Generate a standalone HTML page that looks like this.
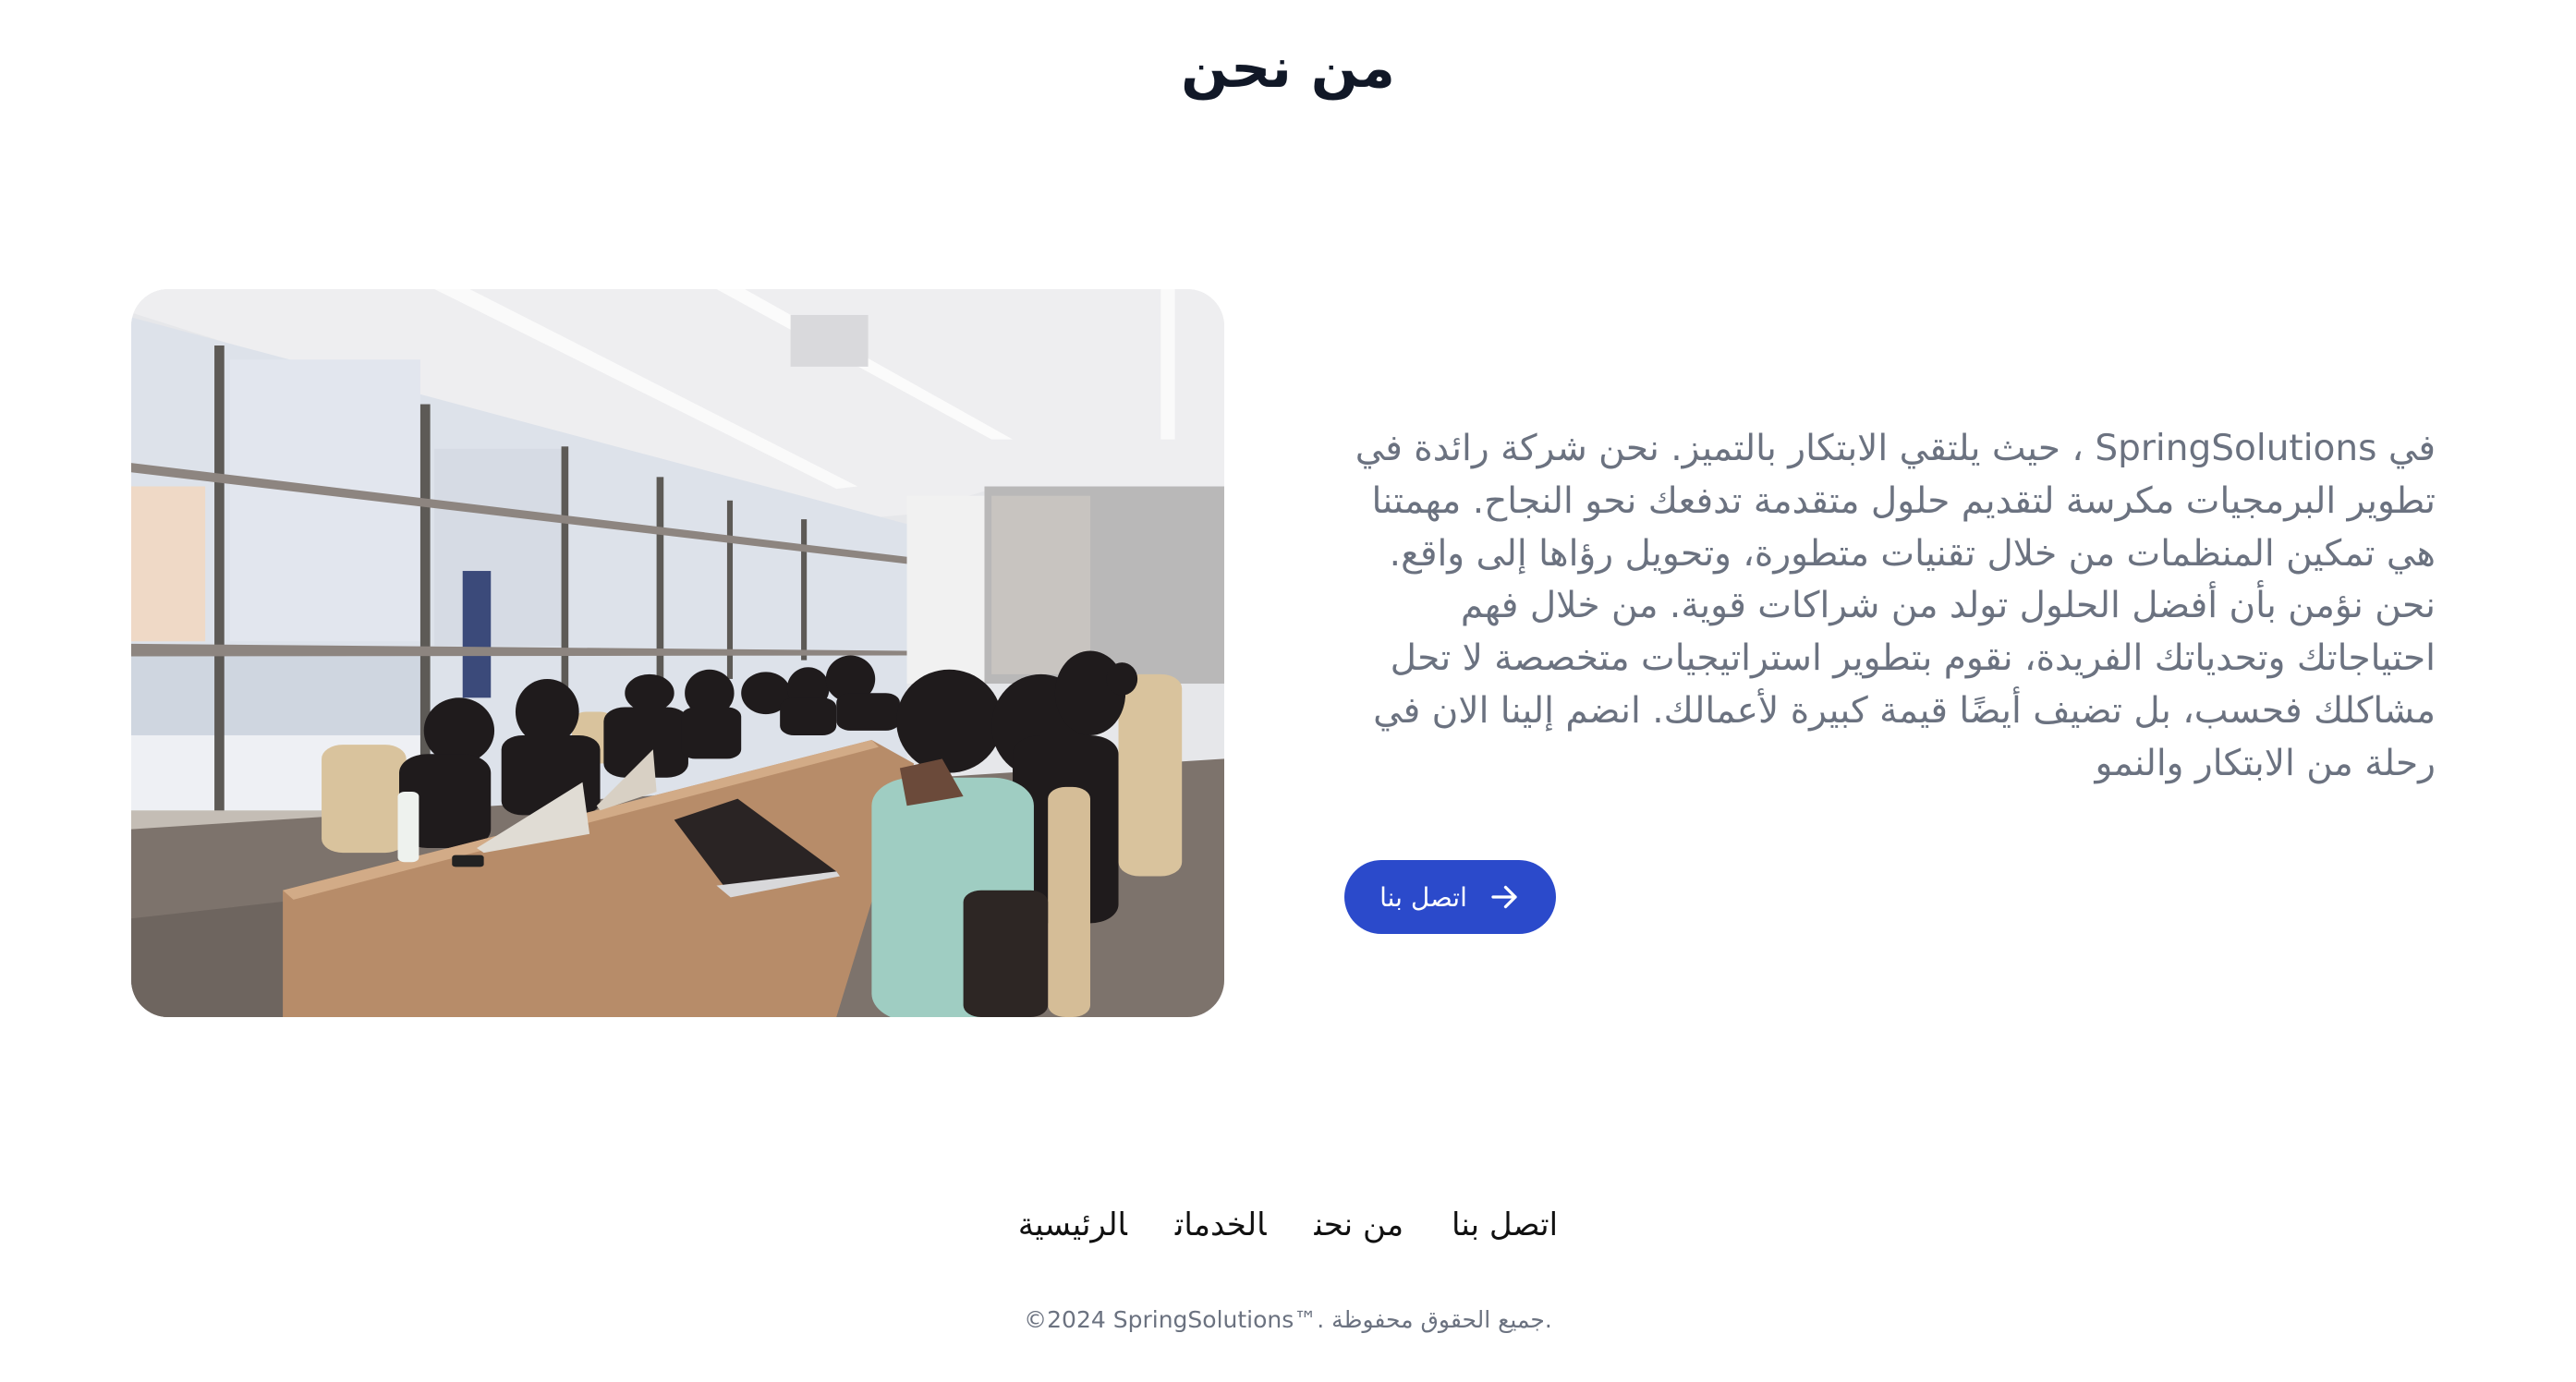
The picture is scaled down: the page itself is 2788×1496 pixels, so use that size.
<!DOCTYPE html>
<html lang="ar" dir="rtl"><head><meta charset="utf-8"><style>
html,body{margin:0;padding:0;background:#fff;width:2788px;height:1496px;overflow:hidden}
body{font-family:"DejaVu Sans","Liberation Sans",sans-serif;position:relative}
h1{position:absolute;left:0;right:0;top:24px;margin:0;text-align:center;font-size:60px;font-weight:bold;color:#111827;line-height:100px}
.p{position:absolute;left:1400px;width:1236px;top:458px;text-align:right;color:#6b7280;font-size:39px;line-height:56.8px;margin:0;white-space:nowrap}
.btn{position:absolute;left:1455px;top:931px;width:229px;height:80px;border-radius:40px;background:#2b4acb;color:#fff;font-size:28px;display:flex;align-items:center;justify-content:center;gap:22px;direction:rtl}
.img{position:absolute;left:142px;top:313px;width:1183px;height:788px;border-radius:40px;overflow:hidden}
.nav{position:absolute;top:1306px;left:0;right:0;text-align:center;font-size:34px;color:#111;direction:rtl}
.nav span{margin:0 26px}
.copy{position:absolute;top:1414px;left:0;right:0;text-align:center;font-size:25px;color:#6b7280}
</style></head><body>
<h1>من نحن</h1>
<div class="img"><svg width="1183" height="788" viewBox="0 0 1550 1550" preserveAspectRatio="none">
<rect width="1550" height="1550" fill="#e6e7ea"/>
<polygon points="0,0 1550,0 1550,420 1210,430 1100,480 950,500 0,50" fill="#eeeef0"/>
<polygon points="430,0 480,0 1030,420 1000,425" fill="#fafafa"/>
<polygon points="830,0 870,0 1250,320 1220,320" fill="#fbfbfb"/>
<rect x="1460" y="0" width="20" height="320" fill="#fafafa"/>
<rect x="935" y="55" width="110" height="110" fill="#d9d9dc"/>
<polygon points="0,60 1100,500 1100,1150 0,1150" fill="#dde2ea"/>
<rect x="0" y="420" width="105" height="330" fill="#efd9c6"/>
<rect x="140" y="150" width="270" height="600" fill="#e2e6ee"/>
<rect x="430" y="340" width="180" height="420" fill="#d6dbe4"/>
<rect x="470" y="600" width="40" height="270" fill="#3b4a7a"/>
<rect x="0" y="780" width="420" height="170" fill="#cfd6e0"/>
<rect x="0" y="950" width="420" height="170" fill="#eef0f4"/>
<g fill="#5d5a56"><rect x="118" y="120" width="14" height="1000"/><rect x="410" y="245" width="14" height="870"/><rect x="610" y="335" width="10" height="600"/><rect x="745" y="400" width="10" height="450"/><rect x="845" y="450" width="8" height="380"/><rect x="950" y="490" width="8" height="300"/></g>
<polygon points="0,370 1100,570 1100,585 0,390" fill="#8d8580"/>
<polygon points="0,755 1100,770 1100,780 0,782" fill="#8d8580"/>
<rect x="1100" y="440" width="110" height="400" fill="#f1f1f1"/>
<rect x="1210" y="420" width="340" height="420" fill="#b9b8b8"/>
<rect x="1220" y="440" width="140" height="380" fill="#c8c4c0"/>
<rect x="0" y="1110" width="300" height="240" fill="#c4bdb5"/>
<polygon points="0,1150 1550,1000 1550,1550 0,1550" fill="#7d736c"/>
<polygon points="0,1340 300,1290 300,1550 0,1550" fill="#6e655f"/>
<g fill="#d9c39d"><rect x="270" y="970" width="120" height="230" rx="30"/><rect x="625" y="900" width="60" height="110" rx="20"/><rect x="1400" y="820" width="90" height="430" rx="30"/></g>
<g fill="#1f1b1c"><ellipse cx="465" cy="940" rx="50" ry="70"/><rect x="380" y="990" width="130" height="200" rx="40"/><ellipse cx="590" cy="900" rx="45" ry="70"/><rect x="525" y="950" width="140" height="170" rx="30"/><ellipse cx="735" cy="860" rx="35" ry="40"/><rect x="670" y="890" width="120" height="150" rx="30"/><ellipse cx="820" cy="860" rx="35" ry="50"/><rect x="780" y="890" width="85" height="110" rx="20"/><ellipse cx="900" cy="860" rx="35" ry="45"/><ellipse cx="960" cy="850" rx="30" ry="45"/><rect x="920" y="870" width="80" height="80" rx="20"/><ellipse cx="1020" cy="830" rx="35" ry="50"/><rect x="1000" y="860" width="90" height="80" rx="20"/><ellipse cx="1160" cy="920" rx="75" ry="110"/><ellipse cx="1290" cy="930" rx="70" ry="110"/><rect x="1250" y="950" width="150" height="400" rx="40"/><ellipse cx="1360" cy="860" rx="50" ry="90"/><ellipse cx="1405" cy="830" rx="22" ry="35"/></g>
<polygon points="215,1280 1050,960 1110,1010 1000,1550 215,1550" fill="#b78c69"/>
<polygon points="215,1280 1050,960 1060,975 230,1300" fill="#d2ab87"/>
<rect x="1050" y="1040" width="230" height="520" rx="60" fill="#9fcdc2"/>
<polygon points="1090,1020 1150,1000 1180,1080 1100,1100" fill="#6b4a3a"/>
<rect x="1300" y="1060" width="60" height="490" rx="25" fill="#d5bd97"/>
<rect x="1180" y="1280" width="120" height="270" rx="25" fill="#2d2624"/>
<polygon points="770,1130 860,1085 1000,1240 850,1290" fill="#2a2424"/>
<polygon points="830,1270 1000,1240 1005,1250 850,1295" fill="#d8d8da"/>
<polygon points="490,1190 640,1050 650,1160 500,1200" fill="#e0dcd4"/>
<polygon points="660,1100 740,980 745,1070 665,1110" fill="#d8d0c4"/>
<rect x="378" y="1070" width="30" height="150" rx="10" fill="#eef2ee"/>
<rect x="455" y="1205" width="45" height="25" rx="5" fill="#222"/>
</svg></div>
<p class="p">في SpringSolutions ، حيث يلتقي الابتكار بالتميز. نحن شركة رائدة في<br>تطوير البرمجيات مكرسة لتقديم حلول متقدمة تدفعك نحو النجاح. مهمتنا<br>هي تمكين المنظمات من خلال تقنيات متطورة، وتحويل رؤاها إلى واقع.<br>نحن نؤمن بأن أفضل الحلول تولد من شراكات قوية. من خلال فهم<br>احتياجاتك وتحدياتك الفريدة، نقوم بتطوير استراتيجيات متخصصة لا تحل<br>مشاكلك فحسب، بل تضيف أيضًا قيمة كبيرة لأعمالك. انضم إلينا الان في<br>رحلة من الابتكار والنمو</p>
<div class="btn"><svg width="36" height="36" viewBox="0 0 24 24" fill="none" stroke="#fff" stroke-width="2.2" stroke-linecap="round" stroke-linejoin="round"><path d="M4 12h16M13 5l7 7-7 7"/></svg><span>اتصل بنا</span></div>
<div class="nav"><span>اتصل بنا</span><span>من نحن</span><span>الخدمات</span><span>الرئيسية</span></div>
<div class="copy" dir="ltr">©2024 SpringSolutions™. جميع الحقوق محفوظة.</div>
</body></html>
